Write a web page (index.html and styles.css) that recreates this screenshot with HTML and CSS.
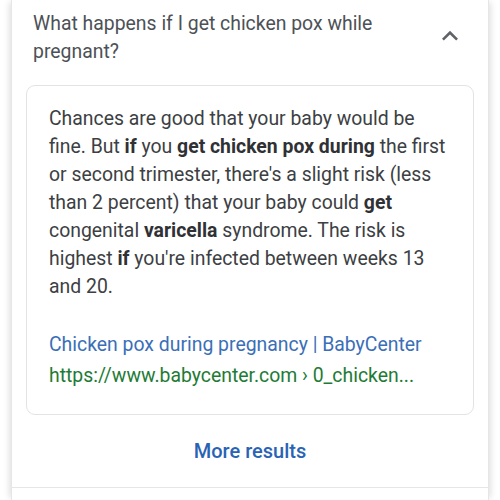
FILE: index.html
```html
<!DOCTYPE html>
<html>
<head>
<meta charset="utf-8">
<link rel="stylesheet" href="styles.css">
</head>
<body>
<div class="card">
  <div class="question">
    <div class="q-text">What happens if I get chicken pox while pregnant?</div>
    <svg class="chev" width="32" height="32" viewBox="0 0 24 24"><path d="M7.4 15.4 12 10.8l4.6 4.6L18 14l-6-6-6 6z" fill="#5f6368"/></svg>
  </div>
  <div class="answer">
    <p class="a-text">Chances are good that your baby would be fine. But <b>if</b> you <b>get chicken pox during</b> the first or second trimester, there's a slight risk (less than 2 percent) that your baby could <b>get</b> congenital <b>varicella</b> syndrome. The risk is highest <b>if</b> you're infected between weeks 13 and 20.</p>
    <div class="source">
      <a class="title">Chicken pox during pregnancy | BabyCenter</a>
      <div class="url">https://www.babycenter.com › 0_chicken...</div>
    </div>
  </div>
  <div class="more">More results</div>
  <div class="sep"></div>
</div>
</body>
</html>
```
FILE: styles.css
```css
html, body { margin: 0; padding: 0; background: #fff; }
body { font-family: Roboto, "Noto Sans", sans-serif; }
.card {
  margin: 0 11px;
  height: 500px;
  background: #fff;
  box-shadow: -4px 0 6px -2px rgba(0,0,0,0.12), 4px 0 6px -2px rgba(0,0,0,0.12);
  border-left: 1px solid #e6e6e6;
  border-right: 1px solid #e6e6e6;
}
.question {
  display: flex;
  align-items: flex-start;
  justify-content: space-between;
  padding: 10px 22px 0 21px;
}
.q-text {
  width: 370px;
  font-size: 19.4px;
  line-height: 28px;
  color: #4d5156;
}
.chev { margin-top: 10px; }
.answer {
  margin: 19px 14px 0 14px;
  border: 1px solid #e3e3e3;
  border-radius: 9px;
  padding: 19px 18px 23px 22px;
}
.a-text {
  margin: 0;
  font-size: 19.4px;
  line-height: 28px;
  color: #3c4043;
}
.a-text b { font-weight: 700; color: #303134; }
.source { margin-top: 30px; }
.title {
  display: block;
  font-size: 19.4px;
  line-height: 28px;
  color: #3a6fb8;
}
.url {
  font-size: 19.4px;
  line-height: 30px;
  color: #1e7b35;
  margin-top: 2px;
}
.more {
  text-align: center;
  font-size: 20px;
  font-weight: 500;
  color: #2a63b5;
  padding-top: 22px;
  height: 50px;
  line-height: 28px;
}
.sep { border-top: 1px solid #e6e6e6; }
```
